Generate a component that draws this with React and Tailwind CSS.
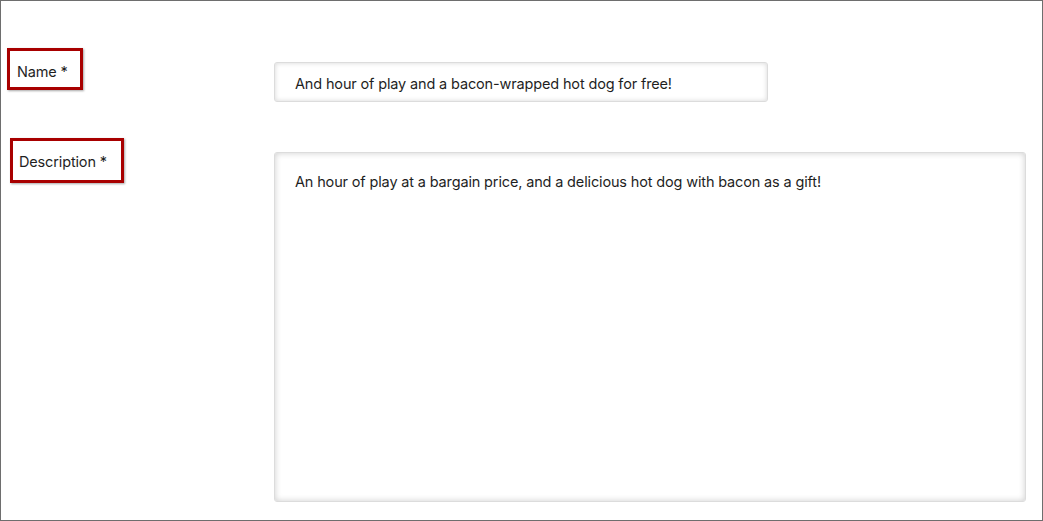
import React from "react";

const font = { fontFamily: '"Inter", "Noto Sans", sans-serif' };

export default function App() {
  return (
    <div
      className="w-[1043px] h-[521px] bg-white border border-[#6e6e6e] pt-[47px] text-[#1f1f1f] text-[14.5px] tracking-[-0.15px]"
      style={font}
    >
      {/* name row */}
      <div className="flex items-start">
        <div className="w-[273px] pl-[6px]">
          <div className="inline-flex items-center h-[42px] w-[76px] border-[3px] border-[#a80000] pl-[7px] pt-[5px] shadow-[1px_1px_2px_rgba(0,0,0,0.35)]">
            Name *
          </div>
        </div>
        <div className="mt-[14px] w-[494px] h-[40px] flex items-center pl-[20px] pt-[3px] border border-[#dcdcdc] rounded-[3px] shadow-[inset_0_0_5px_rgba(0,0,0,0.16)]">
          And hour of play and a bacon-wrapped hot dog for free!
        </div>
      </div>

      {/* description row */}
      <div className="flex items-start mt-[36px]">
        <div className="w-[273px] pl-[9px]">
          <div className="inline-flex items-center h-[45px] w-[114px] border-[3px] border-[#a80000] pl-[6px] pt-[3px] shadow-[1px_1px_2px_rgba(0,0,0,0.35)]">
            Description *
          </div>
        </div>
        <div className="mt-[14px] w-[752px] h-[350px] pl-[20px] pt-[19px] border border-[#dcdcdc] rounded-[3px] shadow-[inset_0_0_6px_rgba(0,0,0,0.2)] leading-[20px]">
          An hour of play at a bargain price, and a delicious hot dog with bacon as a gift!
        </div>
      </div>
    </div>
  );
}
